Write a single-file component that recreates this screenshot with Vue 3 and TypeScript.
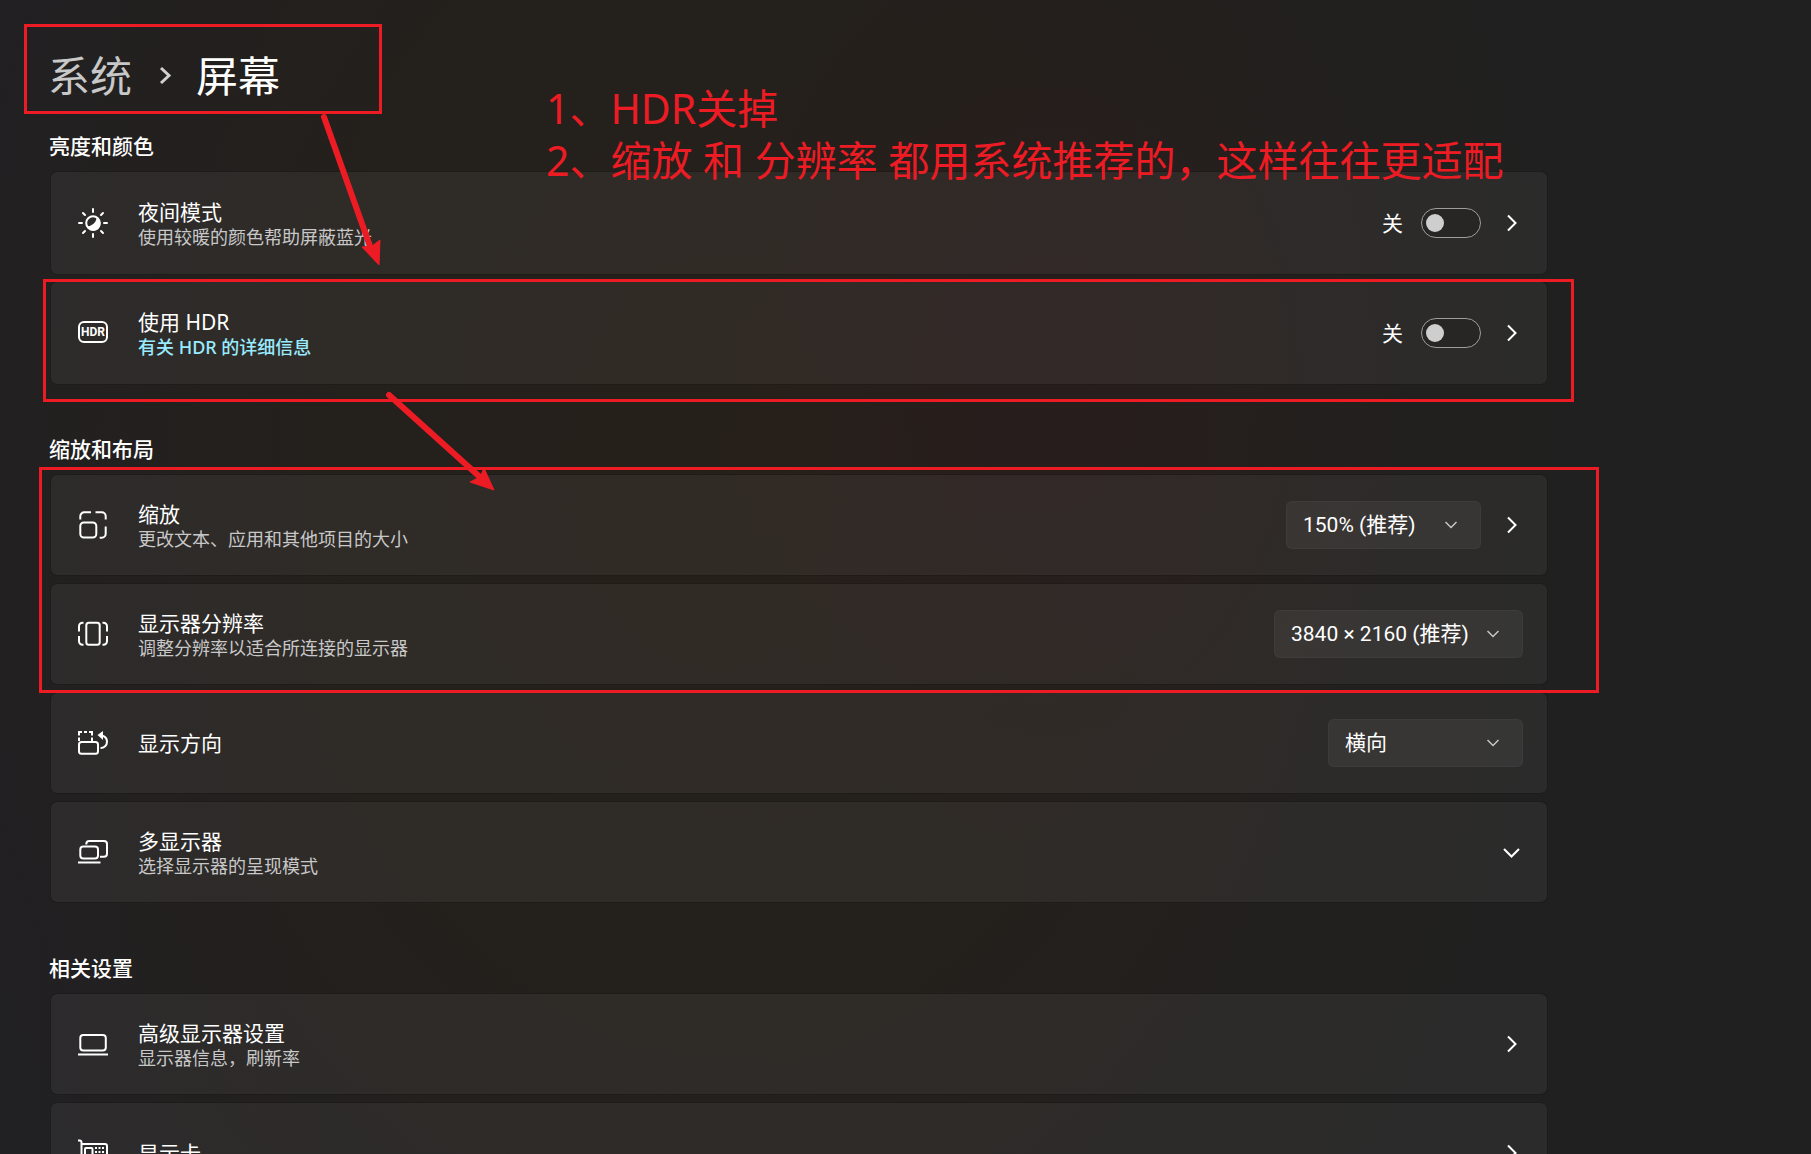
<script setup lang="ts">
import { reactive } from 'vue'

type IconName = 'night' | 'hdr' | 'scale' | 'resolution' | 'orientation' | 'multi' | 'monitor' | 'gpu'

interface Row {
  id: string
  icon: IconName
  title: string
  note?: string
  link?: string
  toggle?: boolean
  options?: string[]
  wide?: boolean
  arrow?: 'right' | 'down'
}

interface Section {
  title: string
  roomy?: boolean
  rows: Row[]
}

const sections: Section[] = [
  {
    title: '亮度和颜色',
    roomy: true,
    rows: [
      { id: 'night', icon: 'night', title: '夜间模式', note: '使用较暖的颜色帮助屏蔽蓝光', toggle: true, arrow: 'right' },
      { id: 'hdr', icon: 'hdr', title: '使用 HDR', link: '有关 HDR 的详细信息', toggle: true, arrow: 'right' },
    ],
  },
  {
    title: '缩放和布局',
    rows: [
      { id: 'scale', icon: 'scale', title: '缩放', note: '更改文本、应用和其他项目的大小', options: ['150% (推荐)'], arrow: 'right' },
      { id: 'resolution', icon: 'resolution', title: '显示器分辨率', note: '调整分辨率以适合所连接的显示器', options: ['3840 × 2160 (推荐)'], wide: true },
      { id: 'orientation', icon: 'orientation', title: '显示方向', options: ['横向'] },
      { id: 'multi', icon: 'multi', title: '多显示器', note: '选择显示器的呈现模式', arrow: 'down' },
    ],
  },
  {
    title: '相关设置',
    rows: [
      { id: 'advanced', icon: 'monitor', title: '高级显示器设置', note: '显示器信息，刷新率', arrow: 'right' },
      { id: 'gpu', icon: 'gpu', title: '显示卡', arrow: 'right' },
    ],
  },
]

const switches = reactive<Record<string, boolean>>({ night: false, hdr: false })
</script>

<template>
  <div class="page">
    <main class="content">
      <nav class="crumbs">
        <a href="#system">系统</a>
        <svg viewBox="0 0 24 24" aria-hidden="true"><path d="M9 4l8 7.500-8 7.500" /></svg>
        <h1>屏幕</h1>
      </nav>

      <section v-for="section in sections" :key="section.title" :class="{ roomy: section.roomy }">
        <h2>{{ section.title }}</h2>
        <div class="cards">
          <div v-for="row in section.rows" :key="row.id" class="card">
            <svg class="icon" viewBox="0 0 30 30" aria-hidden="true">
              <template v-if="row.icon === 'night'">
                <circle cx="15" cy="15" r="6.800" />
                <path class="solid" d="M18.500 9.500C18.500 14 14.500 18 9 18.500A7 7 0 1 0 18.500 9.500z" />
                <path d="M15 1v3M15 26v3M1 15h3M26 15h3M5 5l2 2M23 23l2 2M5 25l2-2M23 7l2-2" stroke-linecap="round" />
              </template>
              <template v-else-if="row.icon === 'hdr'">
                <rect x="1" y="4" width="28" height="20" rx="5" />
                <text x="15" y="18" text-anchor="middle">HDR</text>
              </template>
              <template v-else-if="row.icon === 'scale'">
                <rect x="2.300" y="12.500" width="16" height="15" rx="3.500" />
                <path d="M2.300 9.500V6.300a4 4 0 0 1 4-4H13M17.500 2.300h6.200a4 4 0 0 1 4 4v3.200M27.700 16.500v7.200a4 4 0 0 1-4 4h-2" />
              </template>
              <template v-else-if="row.icon === 'resolution'">
                <rect x="8.300" y="3.700" width="13.400" height="22" rx="2.500" />
                <path d="M5.500 3.700H4.500A3.500 3.500 0 0 0 1 7.200v5.300M1 17v5.200a3.500 3.500 0 0 0 3.500 3.500h1M24.500 3.700h1A3.500 3.500 0 0 1 29 7.200v5.300M29 17v5.200a3.500 3.500 0 0 1-3.500 3.500h-1" />
              </template>
              <template v-else-if="row.icon === 'orientation'">
                <rect x="1" y="14" width="19" height="11.700" rx="2.500" />
                <path d="M1 7.500V4h3M6 4h3M11 4h3v3.500M1 9.500V13M14 9.500V13" />
                <path d="M23 7.500C27 8 29 10.500 29 13.800c0 3.500-2.800 6.200-6.500 6.200" />
                <path class="solid" d="M25 3v9l-5.500-5z" />
              </template>
              <template v-else-if="row.icon === 'multi'">
                <path d="M8.300 7.500V7a3 3 0 0 1 3-3H26a3 3 0 0 1 3 3v9.700a3 3 0 0 1-3 3h-4" />
                <rect x="2.300" y="9.500" width="17.700" height="12" rx="3" />
                <path d="M0 25.500h22.500" />
              </template>
              <template v-else-if="row.icon === 'monitor'">
                <rect x="2.300" y="6" width="25.500" height="15.500" rx="3" />
                <path d="M0 25.500h30" />
              </template>
              <template v-else>
                <path d="M0 2.500h1.500a2 2 0 0 1 2 2V28M3.500 6H27a2 2 0 0 1 2 2v12a2 2 0 0 1-2 2H3.500M8 22v4h14v-4" />
                <rect x="7" y="10" width="7.500" height="8" rx="1" />
                <path d="M17 10h9M17 14h9M17 18h9" stroke-dasharray="2 1.500" />
              </template>
            </svg>

            <div class="text">
              <h3 :id="row.id + '-title'">{{ row.title }}</h3>
              <p v-if="row.note">{{ row.note }}</p>
              <a v-if="row.link" href="#hdr-info">{{ row.link }}</a>
            </div>

            <label v-if="row.toggle" class="toggle">
              <span>{{ switches[row.id] ? '开' : '关' }}</span>
              <input v-model="switches[row.id]" type="checkbox" role="switch" :aria-label="row.title" />
            </label>

            <div v-if="row.options" class="picker" :class="{ wide: row.wide }">
              <select :aria-labelledby="row.id + '-title'">
                <option v-for="option in row.options" :key="option">{{ option }}</option>
              </select>
              <svg viewBox="0 0 12 12" aria-hidden="true"><path d="M.500 3 6 8.500 11.500 3" /></svg>
            </div>

            <button v-if="row.arrow" type="button" class="more" :aria-label="row.title">
              <svg viewBox="0 0 24 24" aria-hidden="true">
                <path v-if="row.arrow === 'right'" d="M9 4.500l7.500 7.500L9 19.500" />
                <path v-else d="M5 9l7.500 7.500L20 9" />
              </svg>
            </button>
          </div>
        </div>
      </section>
    </main>

    <p class="remark">1、HDR关掉<br />2、缩放 和 分辨率 都用系统推荐的，这样往往更适配</p>
    <svg class="marks" width="1620" height="720" viewBox="0 0 1620 720" aria-hidden="true">
      <rect x="25.500" y="25.500" width="355" height="87" />
      <rect x="44.500" y="280.500" width="1528" height="120" />
      <rect x="40.500" y="468.500" width="1557" height="223" />
      <path class="shaft" d="M324 117l47 132" />
      <path class="head" d="M379 265l-17-18 10-1 8-6z" />
      <path class="shaft" d="M389 395l92 83" />
      <path class="head" d="M494 490l-24-8 10-5 4-9z" />
    </svg>
  </div>
</template>

<style>
body {
  margin: 0;
  background: #202020;
}
</style>

<style scoped>
.page {
  position: relative;
  box-sizing: border-box;
  height: 100vh;
  overflow: hidden;
  padding: 48px 48px 0;
  color: #fff;
  font-family: "Noto Sans", "Noto Sans CJK SC", sans-serif;
  background:
    radial-gradient(ellipse 20% 45% at 58% 33%, rgba(42, 28, 29, 0.55), rgba(42, 28, 29, 0)),
    radial-gradient(ellipse 48% 100% at 40% 40%, #26201a, rgba(37, 32, 27, 0.75) 50%, rgba(32, 32, 32, 0)),
    linear-gradient(90deg, #212023, #202020 20%);
}

.content {
  max-width: 1500px;
}

h1,
h2,
h3,
p {
  margin: 0;
  font-weight: 400;
}

a {
  text-decoration: none;
}

svg {
  fill: none;
  stroke: #fff;
  stroke-width: 2;
}

.crumbs {
  display: flex;
  align-items: center;
  gap: 20px;
  height: 56px;
  margin-bottom: 28px;
  font-size: 42px;
  line-height: 56px;
}

.crumbs a {
  color: #c8c8c8;
}

.crumbs h1 {
  font-size: 42px;
}

.crumbs svg {
  width: 24px;
  height: 24px;
  stroke: #d0d0d0;
  stroke-width: 3;
}

h2 {
  margin-bottom: 11px;
  padding-left: 1px;
  font-size: 21px;
  font-weight: 500;
  line-height: 28px;
}

.cards {
  display: flex;
  flex-direction: column;
  gap: 7px;
  margin-bottom: 51px;
  padding-left: 2px;
}

.roomy .cards {
  gap: 6px;
  margin-bottom: 50px;
}

.card {
  display: flex;
  align-items: center;
  box-sizing: border-box;
  min-height: 102px;
  padding: 0 24px 0 27px;
  border: 1px solid rgba(0, 0, 0, 0.12);
  border-radius: 7px;
  background: rgba(255, 255, 255, 0.052);
  background-clip: padding-box;
}

.roomy .card {
  min-height: 104px;
}

.icon {
  flex: none;
  width: 30px;
  height: 30px;
  margin-right: 30px;
}

.icon .solid {
  fill: #fff;
  stroke: none;
}

.icon text {
  fill: #fff;
  stroke: none;
  font: 700 12px Roboto, sans-serif;
}

.text {
  display: flex;
  flex: 1;
  flex-direction: column;
  align-items: flex-start;
}

.text h3 {
  font-size: 21px;
  line-height: 26px;
}

.text h3:not(:only-child) {
  padding-top: 2px;
}

.text p,
.text a {
  font-size: 18px;
  line-height: 24px;
}

.text p {
  color: #c8c8c8;
}

.text a {
  color: #99ebff;
  font-weight: 500;
}

.toggle {
  display: flex;
  align-items: center;
  gap: 18px;
  font-size: 21px;
  line-height: 30px;
}

.toggle input {
  box-sizing: border-box;
  width: 60px;
  height: 30px;
  margin: 0;
  padding: 0 4px;
  display: flex;
  align-items: center;
  appearance: none;
  border: 1px solid #9d9d9d;
  border-radius: 15px;
  background: rgba(0, 0, 0, 0.1);
}

.toggle input::before {
  width: 18px;
  height: 18px;
  border-radius: 50%;
  background: #cecece;
  content: "";
}

.toggle input:checked {
  justify-content: flex-end;
}

.picker {
  position: relative;
  width: 195px;
}

.picker.wide {
  width: 249px;
}

.picker select {
  display: block;
  box-sizing: border-box;
  width: 100%;
  height: 48px;
  padding: 0 16px;
  appearance: none;
  border: 1px solid rgba(255, 255, 255, 0.03);
  border-radius: 6px;
  background: rgba(255, 255, 255, 0.055);
  color: #fff;
  font-family: Roboto, "Noto Sans CJK SC", sans-serif;
  font-size: 21px;
}

.picker option {
  background: #2c2c2c;
}

.picker svg {
  position: absolute;
  top: 18px;
  right: 24px;
  width: 12px;
  height: 12px;
  stroke: #c8c8c8;
  stroke-width: 1.500;
  pointer-events: none;
}

.more {
  width: 24px;
  height: 24px;
  margin-left: 18px;
  padding: 0;
  border: 0;
  background: none;
}

.more svg {
  display: block;
  width: 24px;
  height: 24px;
}

.remark {
  position: absolute;
  top: 82px;
  left: 546px;
  color: #ed1c24;
  font-size: 41px;
  line-height: 52px;
  white-space: nowrap;
}

.marks {
  position: absolute;
  top: 0;
  left: 0;
  stroke: #ed1c24;
  stroke-width: 3;
  pointer-events: none;
}

.marks .shaft {
  stroke-width: 6;
  stroke-linecap: round;
}

.marks .head {
  fill: #ed1c24;
  stroke-width: 1;
}
</style>
